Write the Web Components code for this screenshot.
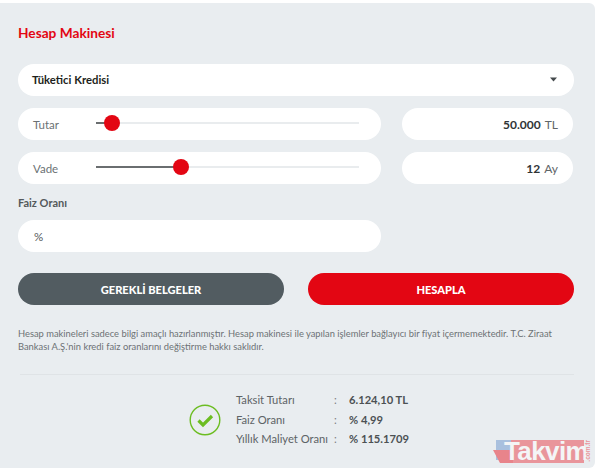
<!DOCTYPE html>
<html lang="tr">
<head>
<meta charset="utf-8">
<title>Hesap Makinesi</title>
<style>
  html, body { margin: 0; height: 100%; background: #fff; overflow: hidden; }
  body { font-family: Lato, "Open Sans", sans-serif; }
</style>
</head>
<body>
<calc-panel>
  <panel-title>Hesap Makinesi</panel-title>
  <select-box>Tüketici Kredisi</select-box>
  <slider-row label="Tutar" percent="6" value="50.000" unit="TL"></slider-row>
  <slider-row label="Vade" percent="32.4" value="12" unit="Ay"></slider-row>
  <rate-field></rate-field>
  <action-buttons></action-buttons>
  <fine-print>Hesap makineleri sadece bilgi amaçlı hazırlanmıştır. Hesap makinesi ile yapılan işlemler bağlayıcı bir fiyat içermemektedir. T.C. Ziraat Bankası A.Ş.'nin kredi faiz oranlarını değiştirme hakkı saklıdır.</fine-print>
  <result-box></result-box>
  <takvim-mark></takvim-mark>
</calc-panel>

<script>
class CalcPanel extends HTMLElement {
  constructor() {
    super()
    this.attachShadow({ mode: 'open' }).innerHTML = `
      <style>
        :host {
          display: block;
          position: relative;
          box-sizing: border-box;
          width: 595px;
          height: 465px;
          margin-top: 3px;
          padding: 0 21px 0 18px;
          background: #e9edf0;
          border-radius: 0 6px 6px 0;
          overflow: hidden;
        }
      </style>
      <slot></slot>
    `
  }
}

class PanelTitle extends HTMLElement {
  constructor() {
    super()
    this.attachShadow({ mode: 'open' }).innerHTML = `
      <style>
        :host {
          display: block;
          padding-top: 21px;
          height: 40px;
          line-height: 18px;
          font-size: 13.7px;
          font-weight: 700;
          color: #e30613;
        }
      </style>
      <slot></slot>
    `
  }
}

class SelectBox extends HTMLElement {
  constructor() {
    super()
    this.attachShadow({ mode: 'open' }).innerHTML = `
      <style>
        :host {
          display: flex;
          align-items: center;
          justify-content: space-between;
          box-sizing: border-box;
          height: 32px;
          padding: 0 17px 2px 14px;
          margin-bottom: 12px;
          background: #fff;
          border-radius: 16px;
          font-size: 11.3px;
          font-weight: 700;
          color: #1d1f20;
        }
        svg { display: block; }
      </style>
      <slot></slot>
      <svg width="7" height="5" viewBox="0 0 7 5"><path d="M0 0.5H7L3.5 4.5Z" fill="#454a4d"/></svg>
    `
  }
}

class SliderRow extends HTMLElement {
  constructor() {
    super()
    const percent = this.getAttribute('percent')
    this.attachShadow({ mode: 'open' }).innerHTML = `
      <style>
        :host {
          display: flex;
          justify-content: space-between;
          margin-bottom: 12px;
        }
        .track-box, .value-box {
          display: flex;
          align-items: center;
          box-sizing: border-box;
          height: 32px;
          background: #fff;
          border-radius: 16px;
        }
        .track-box { width: 363px; padding: 0 22px 0 15px; }
        .value-box {
          width: 171px;
          margin-right: 1px;
          justify-content: flex-end;
          padding-right: 15px;
          gap: 4px;
          font-size: 12px;
          color: #5f6568;
        }
        .label { width: 63px; font-size: 11.5px; color: #6b7174; }
        .track {
          position: relative;
          flex: 1;
          height: 2px;
          margin-top: -3px;
          background: #e9ecee;
        }
        .fill {
          position: absolute;
          left: 0; top: 0;
          height: 2px;
          width: ${percent}%;
          background: #6a6e70;
        }
        .thumb {
          position: absolute;
          left: ${percent}%;
          top: -7px;
          width: 16px;
          height: 16px;
          margin-left: -8px;
          border-radius: 50%;
          background: #e30613;
        }
        b { font-weight: 700; color: #303436; }
      </style>
      <div class="track-box">
        <span class="label">${this.getAttribute('label')}</span>
        <div class="track"><div class="fill"></div><div class="thumb"></div></div>
      </div>
      <div class="value-box"><b>${this.getAttribute('value')}</b><span>${this.getAttribute('unit')}</span></div>
    `
  }
}

class RateField extends HTMLElement {
  constructor() {
    super()
    this.attachShadow({ mode: 'open' }).innerHTML = `
      <style>
        :host { display: block; }
        .title {
          height: 24px;
          margin-top: 1px;
          line-height: 14px;
          font-size: 11px;
          font-weight: 700;
          color: #54595c;
        }
        .input {
          display: flex;
          align-items: center;
          box-sizing: border-box;
          width: 363px;
          height: 32px;
          padding-left: 16px;
          background: #fff;
          border-radius: 16px;
          font-size: 11.5px;
          color: #54595c;
        }
      </style>
      <div class="title">Faiz Oranı</div>
      <div class="input">%</div>
    `
  }
}

class ActionButtons extends HTMLElement {
  constructor() {
    super()
    this.attachShadow({ mode: 'open' }).innerHTML = `
      <style>
        :host {
          display: flex;
          justify-content: space-between;
          margin-top: 21px;
        }
        div {
          display: flex;
          align-items: center;
          justify-content: center;
          width: 266px;
          height: 32px;
          border-radius: 16px;
          font-size: 11.1px;
          font-weight: 900;
          color: #fff;
        }
        .grey { background: #525c61; }
        .red { background: #e30613; }
      </style>
      <div class="grey">GEREKLİ BELGELER</div>
      <div class="red">HESAPLA</div>
    `
  }
}

class FinePrint extends HTMLElement {
  constructor() {
    super()
    this.attachShadow({ mode: 'open' }).innerHTML = `
      <style>
        :host {
          display: block;
          margin-top: 22px;
          width: 545px;
          font-size: 9.35px;
          line-height: 13px;
          color: #6d7275;
        }
      </style>
      <slot></slot>
    `
  }
}

class ResultBox extends HTMLElement {
  constructor() {
    super()
    this.attachShadow({ mode: 'open' }).innerHTML = `
      <style>
        :host {
          display: flex;
          align-items: flex-start;
          box-sizing: border-box;
          height: 92px;
          margin: 21px 0 0 2px;
          padding: 15px 0 0 168.5px;
          border-top: 1px solid #dfe3e6;
        }
        svg { display: block; width: 32px; height: 32px; margin: 14px 15.5px 0 0; }
        .rows {
          display: grid;
          grid-template-columns: 98px 15px auto;
          grid-auto-rows: 19.5px;
          align-items: center;
          font-size: 11.2px;
          color: #5d6366;
        }
        .colon { color: #7b8083; }
        b { font-weight: 700; color: #4c5154; }
      </style>
      <svg viewBox="0 0 32 32">
        <circle cx="16" cy="16" r="14.8" fill="none" stroke="#6cbd22" stroke-width="1.4"/>
        <path d="M9.5 16.5L14 21L23 12" fill="none" stroke="#6cbd22" stroke-width="3.2"/>
      </svg>
      <div class="rows">
        <span>Taksit Tutarı</span><span class="colon">:</span><b>6.124,10 TL</b>
        <span>Faiz Oranı</span><span class="colon">:</span><b>% 4,99</b>
        <span>Yıllık Maliyet Oranı</span><span class="colon">:</span><b>% 115.1709</b>
      </div>
    `
  }
}

class TakvimMark extends HTMLElement {
  constructor() {
    super()
    this.attachShadow({ mode: 'open' }).innerHTML = `
      <style>
        :host {
          position: absolute;
          left: 493px;
          top: 437px;
          width: 100px;
          height: 25px;
          display: block;
        }
        .blue { position: absolute; left: 3px; top: 0; width: 24px; height: 20px; background: #a9c0de; }
        .red { position: absolute; left: 18px; top: 0; width: 73px; height: 23px; background: #e9959b; }
        .flag { position: absolute; left: 0; top: 9px; }
        .word {
          position: absolute;
          left: 11px;
          top: -4px;
          font: 700 26px/30px "Liberation Sans", sans-serif;
          letter-spacing: -0.6px;
          color: #f4f5f6;
        }
        .tr {
          position: absolute;
          left: 91px;
          top: 0;
          writing-mode: vertical-rl;
          transform: rotate(180deg);
          font: 700 6.5px/8px "Liberation Sans", sans-serif;
          color: #e9959b;
        }
      </style>
      <div class="blue"></div>
      <div class="red"></div>
      <svg class="flag" width="20" height="14" viewBox="0 0 20 14"><path d="M0 1H20V14H7Z" fill="#e8848b"/></svg>
      <span class="word">Takvim</span>
      <span class="tr">.com.tr</span>
    `
  }
}

customElements.define('calc-panel', CalcPanel)
customElements.define('panel-title', PanelTitle)
customElements.define('select-box', SelectBox)
customElements.define('slider-row', SliderRow)
customElements.define('rate-field', RateField)
customElements.define('action-buttons', ActionButtons)
customElements.define('fine-print', FinePrint)
customElements.define('result-box', ResultBox)
customElements.define('takvim-mark', TakvimMark)
</script>
</body>
</html>
